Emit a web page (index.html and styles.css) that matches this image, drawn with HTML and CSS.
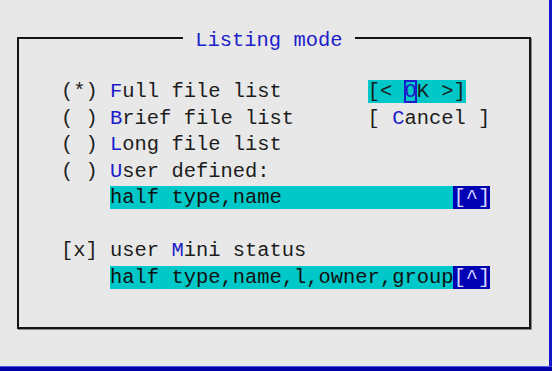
FILE: index.html
```html
<!DOCTYPE html>
<html lang="en">
<head>
    <meta charset="UTF-8">
    <meta name="viewport" content="width=device-width, initial-scale=1.0">
    <title>Listing mode</title>
    <link rel="stylesheet" href="styles.css">
</head>
<body>
    <div class="screen">
        <div class="main">
            <!-- Dialog frame -->
            <div class="frame">
                <div class="title"> Listing mode </div>

                <div class="rows">
                    <div class="row">(*) <span class="hot">F</span>ull file list       <span class="btn">[&lt; <span class="cursor">O</span>K &gt;]</span></div>
                    <div class="row">( ) <span class="hot">B</span>rief file list      [ <span class="hot">C</span>ancel ]</div>
                    <div class="row">( ) <span class="hot">L</span>ong file list</div>
                    <div class="row">( ) <span class="hot">U</span>ser defined:</div>
                    <div class="row">    <span class="input">half type,name              </span><span class="hist">[^]</span></div>
                    <div class="row"> </div>
                    <div class="row">[x] user <span class="hot">M</span>ini status</div>
                    <div class="row">    <span class="input">half type,name,l,owner,group</span><span class="hist">[^]</span></div>
                </div>
            </div>
        </div>
        <div class="bottom"></div>
    </div>
</body>
</html>
```

FILE: styles.css
```css
body {
    margin: 0;
    background: #e8e8e8;
}
.screen {
    width: 552px;
    height: 371px;
    display: flex;
    flex-direction: column;
    background: #e8e8e8;
    font-family: "Liberation Mono", monospace;
    font-size: 20.44px;
    color: #1c1c1c;
    overflow: hidden;
}
.main {
    flex-grow: 1;
    border-right: 3px solid #1414c8;
}
.frame {
    position: relative;
    margin: 37px 0 0 17px;
    width: 510px;
    height: 288px;
    border: 2px solid #141414;
    box-shadow: 1px 1px 0 #8a8a8a;
}
.title {
    position: absolute;
    top: -11px;
    left: 164px;
    height: 26px;
    line-height: 26px;
    white-space: pre;
    color: #2020c8;
    background: #e8e8e8;
}
.rows {
    padding: 40px 0 0 42px;
}
.row {
    height: 26.5px;
    line-height: 26.5px;
    white-space: pre;
}
.hot {
    color: #1c1cc8;
}
.btn {
    background: #00c8c8;
}
.cursor {
    color: #1c1cc8;
    outline: 2px solid #1c1cc8;
    outline-offset: -2px;
}
.input {
    background: #00c8c8;
    color: #101010;
}
.hist {
    background: #0000b4;
    color: #d8d8ff;
}
.bottom {
    height: 4px;
    background: #0000a8;
    border-top: 1px solid #5050e0;
}
```
